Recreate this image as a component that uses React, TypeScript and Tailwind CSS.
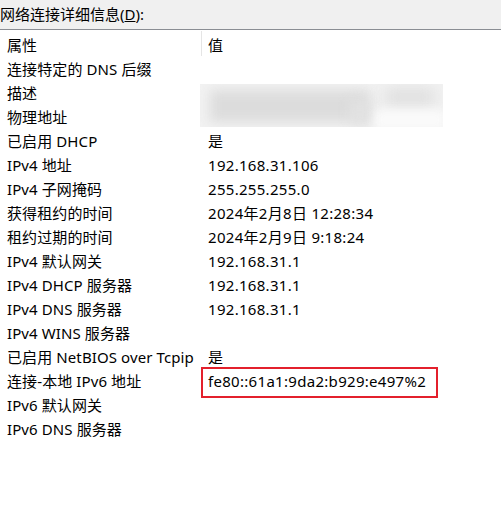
const rows: [string, string][] = [
  ['连接特定的 DNS 后缀', ''],
  ['描述', ''],
  ['物理地址', ''],
  ['已启用 DHCP', '是'],
  ['IPv4 地址', '192.168.31.106'],
  ['IPv4 子网掩码', '255.255.255.0'],
  ['获得租约的时间', '2024年2月8日 12:28:34'],
  ['租约过期的时间', '2024年2月9日 9:18:24'],
  ['IPv4 默认网关', '192.168.31.1'],
  ['IPv4 DHCP 服务器', '192.168.31.1'],
  ['IPv4 DNS 服务器', '192.168.31.1'],
  ['IPv4 WINS 服务器', ''],
  ['已启用 NetBIOS over Tcpip', '是'],
  ['连接-本地 IPv6 地址', 'fe80::61a1:9da2:b929:e497%2'],
  ['IPv6 默认网关', ''],
  ['IPv6 DNS 服务器', ''],
];

export default function App() {
  return (
    <div
      className="w-[501px] h-[510px] bg-white text-[15px] text-[#000] overflow-hidden"
      style={{ fontFamily: '"Noto Sans", "Noto Sans CJK SC", sans-serif' }}
    >
      <div className="h-[30px] bg-[#f0f0f0] border-b border-[#8a8d93] leading-[28px]">
        网络连接详细信息(<span className="underline">D</span>):
      </div>

      <div className="relative">
        {/* header */}
        <div className="flex h-[27px] pt-[3px] leading-[24px]">
          <div className="w-[201px] pl-[7px]">属性</div>
          <div className="border-l border-[#e5e5e5] h-[25px] -mt-[2px] pt-[2px] pl-[6px]">值</div>
        </div>

        {rows.map(([k, v], i) => (
          <div key={i} className="flex h-[24px] leading-[24px] whitespace-nowrap">
            <div className="w-[201px] pl-[7px] tracking-[0.1px]">{k}</div>
            <div className="relative flex-1 pl-[7px] tracking-[0.3px]">
              {v}
              {k === '连接-本地 IPv6 地址' && (
                <div className="absolute left-0 -top-[2px] w-[237px] h-[31px] border-2 border-[#e3202c]" />
              )}
            </div>
          </div>
        ))}

        {/* redacted area */}
        <div className="absolute left-[200px] top-[54px] w-[243px] h-[43px] overflow-hidden bg-[#f2f2f2]">
          <div className="absolute left-[10px] top-[6px] w-[160px] h-[32px] bg-[#dcdcdc] blur-[6px]" />
          <div className="absolute left-[150px] top-[16px] w-[20px] h-[24px] bg-[#e2e2e2] blur-[6px]" />
          <div className="absolute left-[185px] top-[4px] w-[50px] h-[18px] bg-[#e0e0e0] blur-[7px]" />
          <div className="absolute left-[175px] top-[26px] w-[70px] h-[20px] bg-[#fafafa] blur-[5px]" />
        </div>
      </div>
    </div>
  );
}
